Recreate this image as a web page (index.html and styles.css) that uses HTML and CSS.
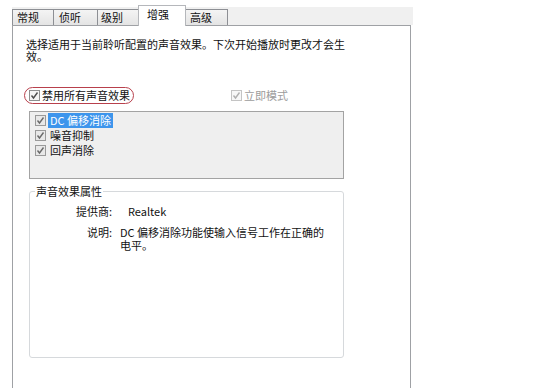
FILE: index.html
```html
<!DOCTYPE html>
<html lang="zh-CN">
<head>
    <meta charset="UTF-8">
    <title>扬声器 属性 - 增强</title>
    <link rel="stylesheet" href="styles.css">
</head>
<body>
    <div class="dialog">
        <div class="tabs">
            <div class="tab tab-general">常规</div>
            <div class="tab tab-listen">侦听</div>
            <div class="tab tab-levels">级别</div>
            <div class="tab tab-active">增强</div>
            <div class="tab tab-advanced">高级</div>
        </div>
        <div class="panel">
            <p class="intro">选择适用于当前聆听配置的声音效果。下次开始播放时更改才会生效。</p>

            <div class="options">
                <label class="check circled">
                    <span class="box"><svg width="11" height="11" viewBox="0 0 11 11"><rect x="0.5" y="0.5" width="10" height="10" fill="#f4f4f4" stroke="#8e8f8f"/><path d="M2.5 5.5 L4.5 8 L8.5 2.5" fill="none" stroke="#4d4d4d" stroke-width="1.4"/></svg></span>
                    <span>禁用所有声音效果</span>
                </label>
                <label class="check disabled">
                    <span class="box"><svg width="11" height="11" viewBox="0 0 11 11"><rect x="0.5" y="0.5" width="10" height="10" fill="#f7f7f7" stroke="#c4c4c4"/><path d="M2.5 5.5 L4.5 8 L8.5 2.5" fill="none" stroke="#b0b0b0" stroke-width="1.4"/></svg></span>
                    <span>立即模式</span>
                </label>
            </div>

            <ul class="effects">
                <li>
                    <span class="box"><svg width="11" height="11" viewBox="0 0 11 11"><rect x="0.5" y="0.5" width="10" height="10" fill="#e8e8e8" stroke="#9a9a9a"/><path d="M2.5 5.5 L4.5 8 L8.5 2.5" fill="none" stroke="#6a6a6a" stroke-width="1.4"/></svg></span>
                    <span class="name selected">DC 偏移消除</span>
                </li>
                <li>
                    <span class="box"><svg width="11" height="11" viewBox="0 0 11 11"><rect x="0.5" y="0.5" width="10" height="10" fill="#e8e8e8" stroke="#9a9a9a"/><path d="M2.5 5.5 L4.5 8 L8.5 2.5" fill="none" stroke="#6a6a6a" stroke-width="1.4"/></svg></span>
                    <span class="name">噪音抑制</span>
                </li>
                <li>
                    <span class="box"><svg width="11" height="11" viewBox="0 0 11 11"><rect x="0.5" y="0.5" width="10" height="10" fill="#e8e8e8" stroke="#9a9a9a"/><path d="M2.5 5.5 L4.5 8 L8.5 2.5" fill="none" stroke="#6a6a6a" stroke-width="1.4"/></svg></span>
                    <span class="name">回声消除</span>
                </li>
            </ul>

            <fieldset class="props">
                <legend>声音效果属性</legend>
                <dl class="prop-grid">
                    <dt>提供商:</dt>
                    <dd class="vendor">Realtek</dd>
                    <dt>说明:</dt>
                    <dd>DC 偏移消除功能使输入信号工作在正确的电平。</dd>
                </dl>
            </fieldset>
        </div>
    </div>
</body>
</html>
```

FILE: styles.css
```css
body {
    margin: 0;
    background: #fff;
    color: #111;
    font-family: "Noto Sans CJK SC", "Liberation Sans", sans-serif;
    font-size: 11px;
}
.dialog {
    width: 401px;
    margin-left: 12px;
    padding-top: 7px;
}
.tabs {
    display: flex;
    align-items: flex-end;
    height: 18px;
    background: #f0f0f0;
}
.tab {
    box-sizing: border-box;
    height: 16px;
    margin-right: -1px;
    padding-left: 4px;
    border: 1px solid #8d8f94;
    border-bottom: none;
    background: linear-gradient(#f4f4f4, #e4e4e4);
    line-height: 15px;
}
.tab-general { width: 42px; }
.tab-listen { width: 45px; padding-left: 5px; }
.tab-levels { width: 42px; padding-left: 3px; }
.tab-advanced { width: 43px; }
.tab-active {
    position: relative;
    z-index: 1;
    width: 48px;
    height: 21px;
    margin-bottom: -1px;
    padding-left: 8px;
    background: #fff;
    border-color: #b5b7bb;
    line-height: 15px;
    padding-top: 1px;
}
.panel {
    box-sizing: border-box;
    width: 399px;
    height: 363px;
    border: 1px solid #9fa1a5;
    border-bottom: none;
    padding: 12px 0 0 13px;
}
.intro {
    width: 324px;
    margin: 0;
    line-height: 12px;
}
.options {
    display: flex;
    align-items: center;
    margin-top: 25px;
}
.check {
    display: flex;
    align-items: center;
    gap: 2px;
    line-height: 13px;
}
.box {
    display: flex;
    width: 11px;
    height: 11px;
}
.circled {
    margin-left: -2px;
    padding: 1px 3px 1px 4px;
    border: 1px solid #b8404c;
    border-radius: 9px;
}
.disabled {
    margin-left: 97px;
    color: #9c9c9c;
}
.effects {
    box-sizing: border-box;
    width: 315px;
    height: 68px;
    margin: 7px 0 0 3px;
    padding: 1px 0 0 5px;
    list-style: none;
    background: #efefef;
    border: 1px solid #a3a3a3;
}
.effects li {
    display: flex;
    align-items: center;
    gap: 2px;
    height: 15px;
}
.name {
    padding: 0 2px;
    line-height: 15px;
}
.selected {
    background: #3d95ec;
    color: #fff;
}
.props {
    box-sizing: border-box;
    width: 315px;
    height: 173px;
    margin: 6px 0 0 3px;
    padding: 0 6px 0 5px;
    border: 1px solid #d6d9dc;
    border-radius: 3px;
}
.props legend {
    padding: 0 1px;
    line-height: 13px;
}
.prop-grid {
    display: grid;
    grid-template-columns: 77px 210px;
    column-gap: 8px;
    row-gap: 8px;
    margin: 7px 0 0;
    line-height: 13px;
}
.prop-grid dt {
    text-align: right;
}
.prop-grid dd {
    margin: 0;
}
.vendor {
    padding-left: 8px;
}
```
